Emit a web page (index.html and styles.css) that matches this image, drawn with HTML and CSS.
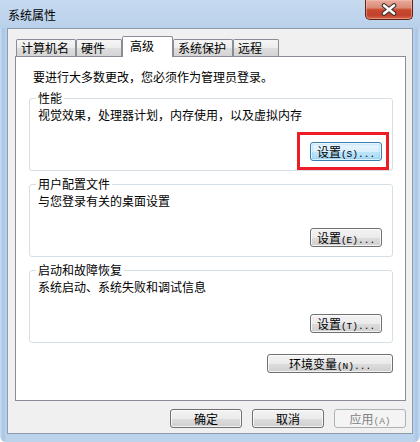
FILE: index.html
```html
<!DOCTYPE html>
<html lang="zh-CN">
<head>
<meta charset="utf-8">
<title>系统属性</title>
<link rel="stylesheet" href="styles.css">
</head>
<body>
<div class="window">
  <div class="titlebar">
    <span class="title">系统属性</span>
    <button class="close" aria-label="关闭">
      <svg width="18" height="13" viewBox="0 0 18 13">
        <path d="M4 2.5 L14 10.5 M14 2.5 L4 10.5" stroke="#3a2a28" stroke-width="4.6" stroke-linecap="round" fill="none"/>
        <path d="M4 2.5 L14 10.5 M14 2.5 L4 10.5" stroke="#ffffff" stroke-width="2.6" stroke-linecap="round" fill="none"/>
      </svg>
    </button>
  </div>
  <div class="client">
    <div class="tabs">
      <div class="tab">计算机名</div>
      <div class="tab">硬件</div>
      <div class="tab active">高级</div>
      <div class="tab">系统保护</div>
      <div class="tab">远程</div>
    </div>
    <div class="panel">
      <p class="intro">要进行大多数更改，您必须作为管理员登录。</p>
      <section class="group">
        <div class="legend">性能</div>
        <p class="desc">视觉效果，处理器计划，内存使用，以及虚拟内存</p>
        <button class="btn btn-default marked">设置<span class="key">(S)...</span></button>
      </section>
      <section class="group">
        <div class="legend">用户配置文件</div>
        <p class="desc">与您登录有关的桌面设置</p>
        <button class="btn">设置<span class="key">(E)...</span></button>
      </section>
      <section class="group">
        <div class="legend">启动和故障恢复</div>
        <p class="desc">系统启动、系统失败和调试信息</p>
        <button class="btn">设置<span class="key">(T)...</span></button>
      </section>
      <button class="btn btn-wide">环境变量<span class="key">(N)...</span></button>
    </div>
    <div class="actions">
      <button class="btn">确定</button>
      <button class="btn">取消</button>
      <button class="btn" disabled>应用<span class="key">(A)</span></button>
    </div>
  </div>
</div>
</body>
</html>
```
FILE: styles.css
```css
html, body {
  margin: 0;
  padding: 0;
}

body {
  width: 420px;
  height: 442px;
  overflow: hidden;
  font-family: "Noto Sans CJK SC", "Noto Sans", sans-serif;
  font-size: 12px;
  color: #000;
}

.window {
  width: 420px;
  height: 442px;
  box-sizing: border-box;
  padding: 0 7px 8px;
  display: flex;
  flex-direction: column;
  background:
    linear-gradient(to right, #c9dcf0 0, #a9c6e6 3px, #bcd3ec 7px, #bcd3ec 413px, #a9c6e6 417px, #c9dcf0 420px);
  border-radius: 0 0 6px 6px;
}

.titlebar {
  height: 28px;
  display: flex;
  justify-content: space-between;
  align-items: flex-start;
  margin: 0 -7px;
  padding: 0 7px;
  background: linear-gradient(to bottom, #c6daef 0, #bfd5ed 60%, #b9d0ea 100%);
}

.title {
  margin: 7px 0 0 1px;
  line-height: 16px;
  font-size: 12px;
  color: #000;
}

.close {
  width: 48px;
  height: 20px;
  margin: 0;
  padding: 0;
  box-sizing: border-box;
  border: 1px solid #5e2217;
  border-top: 0;
  border-radius: 0 0 5px 5px;
  background: linear-gradient(to bottom, #e8ab9d 0, #da8c78 40%, #c9492f 52%, #c0412a 80%, #d8664b 100%);
  box-shadow: inset 0 0 0 1px rgba(255, 200, 190, 0.45);
  display: flex;
  align-items: center;
  justify-content: center;
}

.close svg {
  display: block;
}

.client {
  flex: 1;
  box-sizing: border-box;
  border: 1px solid #8d9bab;
  background: #f0f0f0;
  padding: 7px 6px 0 7px;
  display: flex;
  flex-direction: column;
}

.tabs {
  display: flex;
  align-items: flex-end;
  height: 20px;
  margin-left: 1px;
}

.tab {
  height: 17px;
  min-width: 46px;
  box-sizing: border-box;
  border: 1px solid #898c95;
  border-bottom: 0;
  border-radius: 2px 2px 0 0;
  padding: 0 6px 0 4px;
  line-height: 16px;
  white-space: nowrap;
  background: linear-gradient(to bottom, #f6f6f6 0, #ececec 50%, #dedede 51%, #d4d4d4 100%);
}

.tab.active {
  height: 21px;
  min-width: 51px;
  padding: 0 6px 0 7px;
  line-height: 18px;
  background: #fff;
  margin-bottom: -1px;
  position: relative;
  z-index: 1;
}

.panel {
  height: 345px;
  box-sizing: border-box;
  border: 1px solid #898c95;
  background: #fff;
  padding: 0 12px 0 13px;
  display: flex;
  flex-direction: column;
}

.intro {
  margin: 12px 0 0 4px;
  line-height: 16px;
}

.group {
  position: relative;
  height: 73px;
  box-sizing: border-box;
  border: 1px solid #d5dfe5;
  border-radius: 3px;
  margin-top: 13px;
  padding: 0 10px 9px 8px;
  display: flex;
  flex-direction: column;
}

.legend {
  width: max-content;
  margin: -9px 0 0 -2px;
  padding: 0 2px;
  background: #fff;
  line-height: 16px;
}

.desc {
  margin: 2px 0 0;
  line-height: 14px;
}

.btn {
  width: 72px;
  height: 19px;
  box-sizing: border-box;
  margin: 0;
  padding: 0;
  border: 1px solid #707070;
  border-radius: 3px;
  font-family: "Noto Sans CJK SC", "Noto Sans", sans-serif;
  font-size: 12px;
  line-height: 17px;
  color: #000;
  text-align: center;
  white-space: nowrap;
  background: linear-gradient(to bottom, #f3f3f3 0, #ebebeb 50%, #dddddd 51%, #cfcfcf 100%);
  box-shadow: inset 0 0 0 1px rgba(255, 255, 255, 0.75);
}

.group .btn {
  margin-top: auto;
  align-self: flex-end;
}

.key {
  font-family: "Liberation Mono", monospace;
  font-size: 9.5px;
}

.btn-default {
  border-color: #3c7fb1;
  background: linear-gradient(to bottom, #eaf6fd 0, #d9f0fc 50%, #bee6fd 51%, #a7d9f5 100%);
  box-shadow: inset 0 0 0 1px rgba(255, 255, 255, 0.7), inset 0 0 2px 1px rgba(80, 180, 240, 0.5);
}

.marked {
  position: relative;
}

.marked::after {
  content: "";
  position: absolute;
  top: -11px;
  right: -8px;
  bottom: -10px;
  left: -14px;
  border: 3px solid #ee1c24;
}

.btn-wide {
  width: 126px;
  align-self: flex-end;
  margin-top: 11px;
}

.btn:disabled {
  border-color: #adb2b5;
  background: #f4f4f4;
  color: #838383;
  box-shadow: none;
}

.actions {
  display: flex;
  justify-content: flex-end;
  gap: 10px;
  margin-top: 8px;
}
```
